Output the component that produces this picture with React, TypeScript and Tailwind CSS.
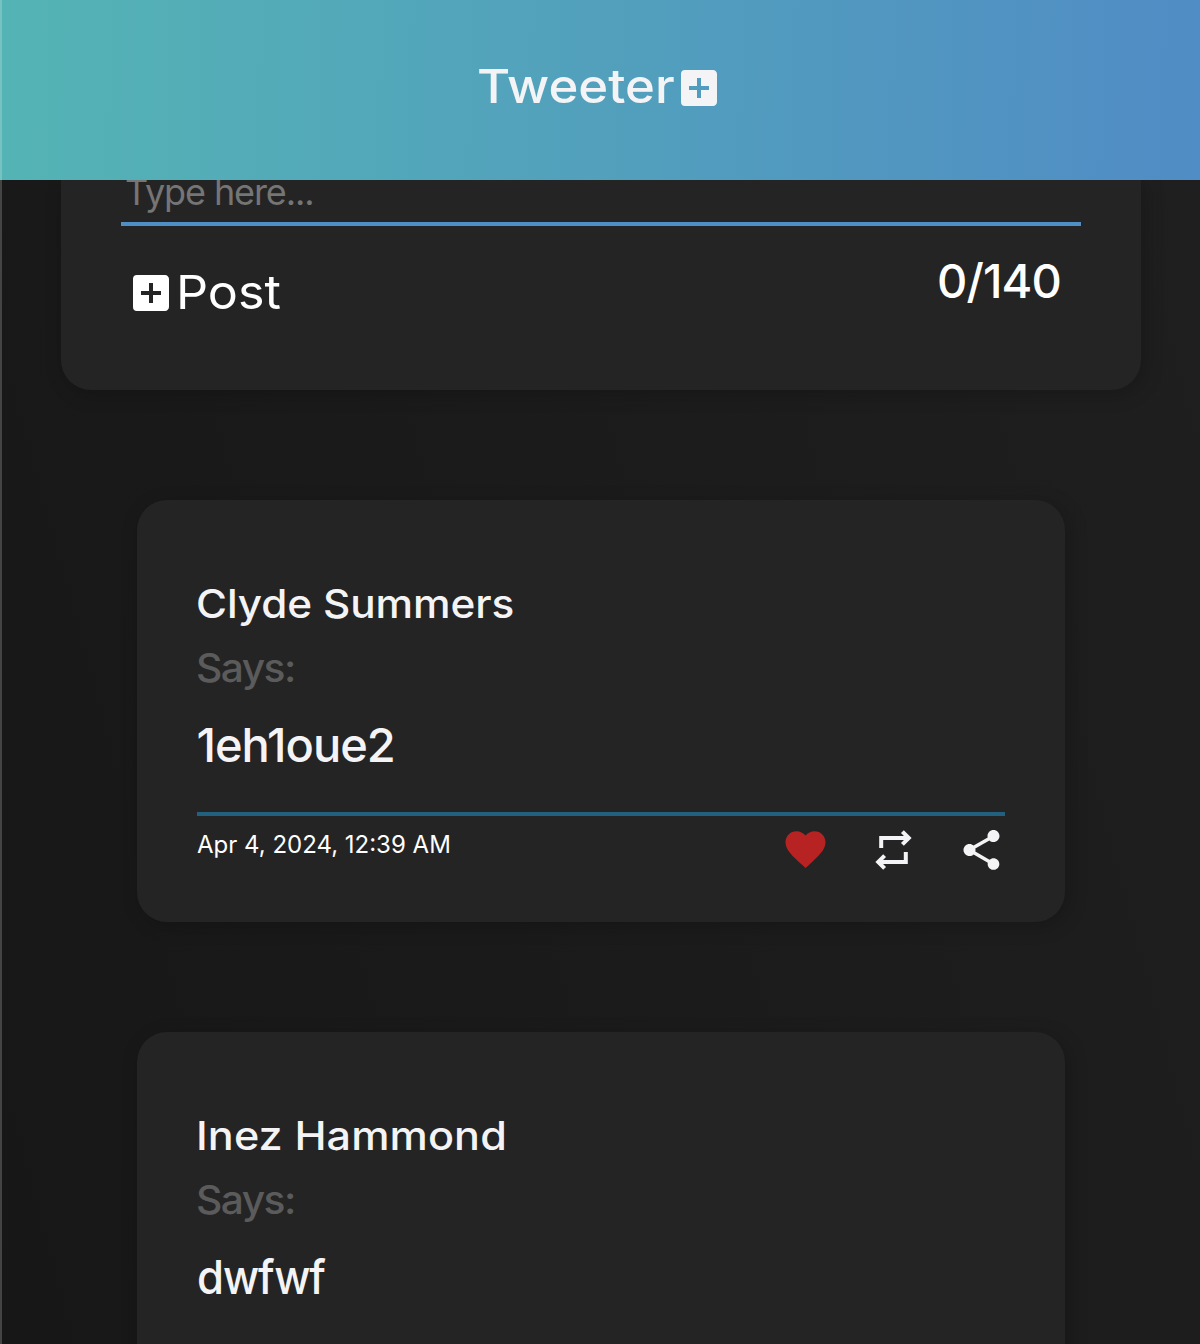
import React from "react";
import { MdAddBox, MdFavorite, MdShare } from "react-icons/md";

type Tweet = {
  author: string;
  authorClass: string;
  message: string;
  messageClass: string;
  date?: string;
};

const tweets: Tweet[] = [
  {
    author: "Clyde Summers",
    authorClass: "tracking-[-0.1px] scale-x-[1.084]",
    message: "1eh1oue2",
    messageClass: "tracking-[-1px]",
    date: "Apr 4, 2024, 12:39 AM",
  },
  {
    author: "Inez Hammond",
    authorClass: "tracking-[0.1px] scale-x-[1.105]",
    message: "dwfwf",
    messageClass: "tracking-[-1.2px] scale-x-[0.93]",
  },
];

function RetweetIcon() {
  return (
    <svg viewBox="0 0 24 24" fill="none" strokeWidth="2" className="size-12 stroke-[#f4f4f6]">
      <path d="M6.1 11V6H19.2M16.7 2.8L19.9 6L16.7 9.2" />
      <path d="M18.4 13V18H5.3M7.8 14.8L4.6 18L7.8 21.2" />
    </svg>
  );
}

function TweetCard({ tweet }: { tweet: Tweet }) {
  return (
    <article className="mx-auto h-[422px] w-[928px] shrink-0 rounded-[30px] bg-[#242424] px-[60px] pt-[76px] shadow-[4px_4px_20px_rgba(0,0,0,0.2)]">
      <h2 className="h-14 text-[39px] leading-[56px] font-medium whitespace-nowrap">
        <span className={`-ml-px inline-block origin-left ${tweet.authorClass}`}>{tweet.author}</span>
      </h2>
      <p className="mt-2 -ml-px h-14 text-[39px] leading-[56px] font-medium text-[#5b5b5b]">
        <span className="inline-block origin-left scale-x-[1.045] tracking-[-1.5px]">Says:</span>
      </p>
      <p className="mt-[15px] h-[69px] text-[47px] leading-[68px] font-medium">
        <span className={`-ml-[0.5px] inline-block origin-left ${tweet.messageClass}`}>{tweet.message}</span>
      </p>
      {tweet.date && (
        <div className="mt-8 flex h-[62px] items-start justify-between border-t-4 border-[#22607f]">
          <time className="mt-[13px] text-2xl leading-8 whitespace-nowrap text-white">{tweet.date}</time>
          <div className="mt-[10px] flex items-start gap-10">
            <MdFavorite className="size-12 translate-x-[0.5px] translate-y-[-0.7px] text-[#b72323]" />
            <RetweetIcon />
            <MdShare className="size-12 translate-x-[0.5px]" />
          </div>
        </div>
      )}
    </article>
  );
}

export default function App() {
  return (
    <div className="flex h-[1344px] w-[1200px] flex-col overflow-hidden bg-[linear-gradient(75deg,#171717,#1f1f1f)] font-['Inter',sans-serif] text-[#f4f4f6]">
      <div className="flex h-full flex-col border-l-2 border-[#444444]">
        <header className="relative z-10 -ml-0.5 flex h-[180px] shrink-0 justify-center border-l-2 border-[#76c3c1] bg-[linear-gradient(92deg,#54b4b4,#508cc5)] pt-[52px]">
          <h1 className="flex h-[70px] items-center text-[47px] font-medium">
            <span className="-mt-0.5 w-[195px] whitespace-nowrap">
              <span className="-ml-[3px] inline-block origin-left scale-x-[1.083]">Tweeter</span>
            </span>
            <MdAddBox className="mt-0.5 size-12" />
          </h1>
        </header>
        <main className="flex min-h-0 flex-1 flex-col">
          <form className="mx-auto h-[210px] w-[1080px] shrink-0 rounded-b-[30px] bg-[#242424] px-[60px] shadow-[4px_4px_20px_rgba(0,0,0,0.2)]">
            <div className="flex h-[46px] items-end border-b-4 border-[#508fc5]">
              <span className="mb-[6px] ml-1 block text-[36px] leading-[48px] tracking-[-1.1px] text-[#757575]">Type here...</span>
            </div>
            <div className="flex items-start justify-between pt-[29px] pr-5 pl-1.5 text-[47px] text-white">
              <span className="mt-2 flex h-[60px] items-center">
                <MdAddBox className="size-12" />
                <span className="-mt-0.5 ml-px inline-block origin-left scale-x-[1.07]">Post</span>
              </span>
              <span className="leading-[52px] font-medium tracking-[-0.9px]">0/140</span>
            </div>
          </form>
          <section className="flex flex-col gap-[110px] pt-[110px]">
            {tweets.map((tweet) => (
              <TweetCard key={tweet.author} tweet={tweet} />
            ))}
          </section>
        </main>
      </div>
    </div>
  );
}
